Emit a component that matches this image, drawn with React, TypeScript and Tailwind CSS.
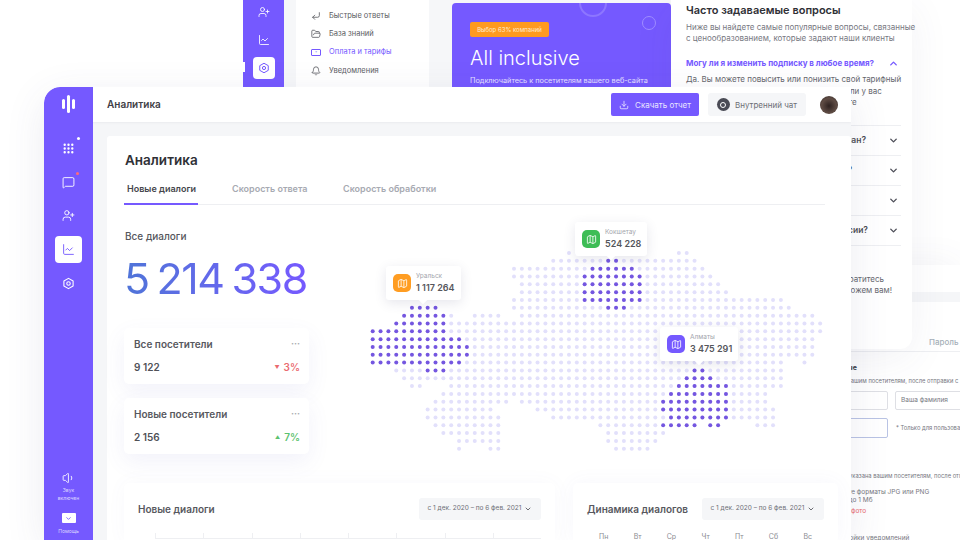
import { Bell, ChartLine, ChevronDown, ChevronUp, CornerDownLeft, Download, FolderOpen, Grip, Map as MapIcon, MessageSquare, UserPlus, Volume1 } from "lucide-react";

const font = { fontFamily: "Inter, 'Noto Sans', sans-serif" };

// dot map rows: [row, from, to]
const lightDots: number[][] = [
  [0, 25, 34], [0, 39, 40], [1, 23, 41], [2, 18, 42], [3, 18, 43], [4, 19, 44], [5, 19, 45], [6, 18, 52],
  [7, 18, 53], [8, 10, 10], [8, 13, 16], [8, 19, 56], [9, 10, 57], [10, 10, 57], [11, 12, 56], [12, 13, 56],
  [13, 13, 56], [14, 12, 52], [14, 55, 55], [15, 3, 6], [15, 10, 52], [16, 4, 52], [17, 5, 6], [17, 10, 52],
  [18, 9, 50], [19, 8, 17], [19, 19, 50], [20, 7, 15], [20, 21, 51], [21, 7, 16], [21, 23, 51], [22, 8, 16],
  [22, 29, 36], [22, 49, 51], [23, 9, 16], [23, 30, 37], [24, 11, 16], [24, 30, 36], [25, 11, 11], [25, 15, 16], [25, 31, 35],
];
const darkDots: number[][] = [
  [1, 30, 31], [2, 28, 33], [3, 27, 34], [4, 27, 34], [5, 27, 34], [6, 27, 34], [7, 5, 8], [7, 30, 32],
  [8, 4, 9], [9, 3, 9], [10, 0, 9], [11, 0, 11], [12, 0, 12], [13, 0, 12], [14, 0, 11], [15, 7, 9], [15, 41, 42],
  [16, 40, 43], [17, 39, 45], [18, 38, 45], [19, 37, 45], [20, 37, 45], [21, 38, 45], [22, 37, 41], [22, 43, 44],
];

function expand(rows: number[][]) {
  const out: { x: number; y: number }[] = [];
  rows.forEach(([r, from, to]) => {
    for (let c = from; c <= to; c++) out.push({ x: 4.7 + c * 7.85, y: 25 + r * 7.83 });
  });
  return out;
}

const HexIcon = ({ className }: { className?: string }) => (
  <svg viewBox="0 0 24 24" fill="none" stroke="currentColor" strokeWidth="2" className={className}>
    <path d="M12 2.5l8.5 4.8v9.4L12 21.5l-8.5-4.8V7.3z" strokeLinejoin="round" />
    <circle cx="12" cy="12" r="3.2" />
  </svg>
);

const Pin = ({ pos, color, city, value }: { pos: string; color: string; city: string; value: string }) => (
  <div className={`absolute flex items-center gap-[5px] rounded-[3px] bg-white pl-[7px] pr-[6px] py-[6px] shadow-[0_3px_12px_rgba(60,60,110,0.13)] ${pos}`}>
    <div className={`flex h-[18px] w-[18px] items-center justify-center rounded-[5px] ${color}`}>
      <MapIcon className="h-[11px] w-[11px] text-white" strokeWidth={1.8} />
    </div>
    <div>
      <div className="text-[6.5px] leading-[9px] text-[#a4a6ad]">{city}</div>
      <div className="mt-[1px] text-[9px] font-semibold leading-[12px] text-[#55565c] whitespace-nowrap">{value}</div>
    </div>
    <div className="absolute bottom-[-3px] left-1/2 h-[6px] w-[6px] -translate-x-1/2 rotate-45 bg-white" />
  </div>
);

const StatCard = ({ title, value, change, up }: { title: string; value: string; change: string; up?: boolean }) => (
  <div className="h-[56px] rounded-[5px] bg-white pl-[10px] pr-[9px] pt-[9px] shadow-[0_8px_22px_rgba(90,90,190,0.08)]">
    <div className="flex items-center justify-between">
      <span className="text-[10px] font-semibold leading-[14px] text-[#57585e]">{title}</span>
      <span className="text-[9px] font-bold leading-[14px] text-[#a8a9b0]">···</span>
    </div>
    <div className="mt-[9px] flex items-center justify-between">
      <span className="text-[10px] font-semibold leading-[14px] text-[#505157]">{value}</span>
      <span className={`flex items-center gap-[4px] text-[10px] font-semibold leading-[14px] ${up ? "text-[#5cc26f]" : "text-[#ea6a6f]"}`}>
        <span className="text-[5px]">{up ? "▲" : "▼"}</span>
        {change}
      </span>
    </div>
  </div>
);

const Period = () => (
  <div className="flex h-[22px] w-[122px] items-center justify-center gap-[3px] rounded-[3px] bg-[#f5f6f8] text-[6.5px] text-[#6d6e75]">
    с 1 дек. 2020 – по 6 фев. 2021
    <ChevronDown className="h-[8px] w-[8px]" strokeWidth={3} />
  </div>
);

const Faq = ({ text, gap }: { text: string; gap: string }) => (
  <div className="flex h-[30px] items-center justify-end border-b border-[#eeeff2] text-[8.5px] font-semibold text-[#4d4e55]">
    <span className={`whitespace-nowrap ${gap}`}>{text}</span>
    <ChevronDown className="mr-[2px] h-[11px] w-[11px] text-[#4d4e58]" strokeWidth={3} />
  </div>
);

function TopWindow() {
  return (
    <div className="absolute left-[243px] top-0 flex h-[90px] w-[428px] bg-[#f6f7f9]">
      <div className="relative flex w-[41px] flex-col items-center bg-[#7559ff] pt-[6px] text-white">
        <div className="absolute left-0 top-[62px] h-[10px] w-[2px] bg-white" />
        <UserPlus className="h-[12px] w-[12px]" strokeWidth={1.7} />
        <ChartLine className="mt-[16px] h-[12px] w-[12px]" strokeWidth={1.7} />
        <div className="mt-[11px] flex h-[22px] w-[22px] items-center justify-center rounded-[4px] bg-white">
          <HexIcon className="h-[12px] w-[12px] text-[#7559ff]" />
        </div>
      </div>
      <div className="ml-[12px] w-[133px] bg-white pl-[15px] pt-[7px] text-[7.5px] text-[#5c5d63]">
        <div className="flex h-[18px] items-center gap-[8px]"><CornerDownLeft className="h-[10px] w-[10px]" />Быстрые ответы</div>
        <div className="flex h-[18px] items-center gap-[8px]"><FolderOpen className="h-[10px] w-[10px]" />База знаний</div>
        <div className="flex h-[18px] items-center gap-[8px] text-[#7559ff]">
          <div className="flex h-[7px] w-[10px] items-center justify-center rounded-[1px] border border-[#7559ff] text-[4px] leading-none">+</div>Оплата и тарифы
        </div>
        <div className="flex h-[20px] items-center gap-[8px]"><Bell className="h-[10px] w-[10px]" />Уведомления</div>
      </div>
      <div className="relative ml-[23px] mt-[3px] h-[90px] w-[219px] overflow-hidden rounded-t-[4px] bg-[#7559ff] pl-[18px] pt-[19px] text-white">
        <div className="absolute left-[127px] top-[-14px] h-[28px] w-[28px] rounded-full border-2 border-[#8d76ff]" />
        <div className="absolute left-[190px] top-[13px] h-[14px] w-[14px] rounded-full border border-[#a08dff]" />
        <div className="flex h-[15px] w-[79px] items-center justify-center rounded-[2px] bg-[#ff9a1f] text-[6px] text-[#ffeccf]">Выбор 63% компаний</div>
        <div className="mt-[8px] text-[20px] font-light leading-[26px]">All inclusive</div>
        <div className="mt-[4px] whitespace-nowrap text-[7.3px] leading-[12px] text-[#e6e1ff]">Подключайтесь к посетителям вашего веб-сайта</div>
      </div>
    </div>
  );
}

function FaqWindow() {
  return (
    <div className="absolute left-[671px] top-0 h-[349px] w-[241px] rounded-br-[12px] bg-white pl-[15px] pr-[11px] shadow-[0_10px_40px_rgba(70,70,120,0.07)]">
      <div className="pt-[3px] text-[11px] font-semibold leading-[15px] text-[#2f3036]">Часто задаваемые вопросы</div>
      <div className="mt-[4px] whitespace-nowrap text-[8px] leading-[11px] text-[#77787f]">
        Ниже вы найдете самые популярные вопросы, связанные<br />с ценообразованием, которые задают наши клиенты
      </div>
      <div className="mt-[13px] flex items-center justify-between text-[8px] font-bold leading-[12px] text-[#7559ff]">
        Могу ли я изменить подписку в любое время?
        <ChevronUp className="mr-[2px] h-[11px] w-[11px]" strokeWidth={3} />
      </div>
      <div className="mt-[5px] whitespace-nowrap text-[8px] leading-[11.5px] text-[#66676e]">
        Да. Вы можете повысить или понизить свой тарифный<br />план в любое время. Хотите узнать, есть ли у вас<br />скидка на оплату и сколько вы сэкономите
      </div>
      <div className="mt-[16px] border-b border-[#eeeff2]" />
      <Faq text="Как выбрать тарифный план?" gap="mr-[22px]" />
      <Faq text="Есть ли пробный период?" gap="mr-[36px]" />
      <Faq text="" gap="" />
      <Faq text="Как перейти на другую версии?" gap="mr-[20px]" />
      <div className="mt-[28px] whitespace-nowrap pr-[9px] text-right text-[8px] leading-[11px] text-[#66676e]">
        <span className="mr-[8px]">Если остались вопросы, обратитесь</span><br />к нам, и мы поможем вам!
      </div>
    </div>
  );
}

function ProfileWindow() {
  return (
    <div className="absolute left-[760px] top-[265px] h-[275px] w-[200px] bg-white text-[6.5px] text-[#77787f] shadow-[0_-6px_30px_rgba(70,70,120,0.05)]">
      <div className="mt-[27px] h-[10px] bg-[#f5f6f8]" />
      <div className="mt-[34px] h-[16px] border-b border-[#eeeff2] pl-[169px] text-[8px] font-medium leading-[12px] text-[#a6b0b8]">Пароль</div>
      <div className="mt-[11px] pl-[40px] text-[7px] font-bold leading-[10px] text-[#404148]">Личные данные</div>
      <div className="mt-[3px] whitespace-nowrap pl-[28px] text-[5.8px] leading-[9px]">Ваши данные видны вашим посетителям, после отправки с</div>
      <div className="mt-[6px] flex gap-[7px] pl-[60px]">
        <div className="h-[19px] w-[68px] shrink-0 rounded-[2px] border border-[#dedfe4]" />
        <div className="flex h-[19px] w-[70px] shrink-0 items-center rounded-[2px] border border-[#dedfe4] pl-[5px]">Ваша фамилия</div>
      </div>
      <div className="mt-[8px] flex items-center gap-[8px] pl-[60px]">
        <div className="h-[20px] w-[68px] shrink-0 rounded-[2px] border border-[#b9c3e4]" />
        <span className="whitespace-nowrap text-[5.8px]">* Только для пользоват</span>
      </div>
      <div className="mt-[33px] whitespace-nowrap pl-[53px] text-[5.8px] leading-[9px]">Фотография указана вашим посетителям, после отп</div>
      <div className="mt-[8px] pl-[54px] leading-[8px] whitespace-nowrap">Используйте форматы JPG или PNG<br />Размером до 1 Мб</div>
      <div className="mt-[3px] pl-[63px] text-[#ea6a6f] whitespace-nowrap">Удалить фото</div>
      <div className="mt-[17px] pl-[70px] text-[#77787f] whitespace-nowrap">Настройки уведомлений</div>
    </div>
  );
}

function Sidebar() {
  return (
    <div className="flex w-[49px] shrink-0 flex-col items-center rounded-tl-[16px] bg-[#7559ff] text-white">
      <div className="mt-[8px] flex h-[18px] items-center gap-[2px]">
        <div className="h-[10px] w-[3px] rounded-full bg-white" />
        <div className="h-[18px] w-[3px] rounded-full bg-white" />
        <div className="h-[10px] w-[3px] rounded-full bg-white" />
      </div>
      <div className="relative mt-[29px]">
        <Grip className="h-[13px] w-[13px]" strokeWidth={2.4} />
        <div className="absolute right-[-5px] top-[-5px] h-[3px] w-[3px] rounded-full bg-white" />
      </div>
      <div className="relative mt-[21px]">
        <MessageSquare className="h-[13px] w-[13px]" strokeWidth={1.7} />
        <div className="absolute right-[-4px] top-[-4px] h-[3px] w-[3px] rounded-full bg-[#ff6b7a]" />
      </div>
      <UserPlus className="mt-[20px] h-[13px] w-[13px]" strokeWidth={1.7} />
      <div className="mt-[14px] flex h-[27px] w-[27px] items-center justify-center rounded-[4px] bg-white">
        <ChartLine className="h-[13px] w-[13px] text-[#7559ff]" strokeWidth={1.7} />
      </div>
      <HexIcon className="mt-[14px] h-[13px] w-[13px]" />
      <Volume1 className="mt-[181px] h-[14px] w-[14px]" strokeWidth={1.5} />
      <div className="mt-[1px] text-center text-[5px] leading-[8px] text-[#dcd6ff]">Звук<br />включен</div>
      <div className="mt-[11px] flex h-[10px] w-[14px] items-center justify-center rounded-[1px] bg-white">
        <ChevronDown className="h-[7px] w-[7px] text-[#7559ff]" strokeWidth={3} />
      </div>
      <div className="mt-[4px] text-[5px] leading-[8px] text-[#dcd6ff]">Помощь</div>
    </div>
  );
}

function Header() {
  return (
    <div className="flex h-[35px] shrink-0 items-center bg-white pl-[14px] shadow-[0_1px_2px_rgba(60,60,90,0.06)]">
      <span className="text-[10px] font-semibold text-[#3f4046]">Аналитика</span>
      <button className="ml-auto flex h-[23px] w-[88px] items-center justify-center gap-[6px] rounded-[2px] bg-[#7559ff] text-[8px] text-[#e9e5ff]">
        <Download className="h-[10px] w-[10px]" strokeWidth={2} />
        Скачать отчет
      </button>
      <button className="ml-[9px] flex h-[23px] w-[98px] items-center justify-center gap-[5px] rounded-[3px] bg-[#f5f6f8] text-[8px] text-[#6d6e75]">
        <span className="flex h-[13px] w-[13px] items-center justify-center rounded-full bg-[#4a4b55]">
          <span className="h-[6px] w-[6px] rounded-full border-[1.5px] border-white" />
        </span>
        Внутренний чат
      </button>
      <div className="ml-[14px] mr-[13px] h-[18px] w-[18px] rounded-full bg-[radial-gradient(circle_at_50%_55%,#2e2220_0%,#5f4c44_55%,#2c2422_100%)]" />
    </div>
  );
}

export default function App() {
  const light = expand(lightDots);
  const dark = expand(darkDots);
  return (
    <div className="relative h-[540px] w-[960px] overflow-hidden bg-white" style={font}>
      <TopWindow />
      <ProfileWindow />
      <FaqWindow />

      <div className="absolute left-[44px] top-[87px] flex h-[453px] w-[807px] overflow-hidden rounded-tl-[16px] bg-[#f5f6f8] shadow-[0_10px_40px_rgba(70,70,120,0.1)]">
        <Sidebar />
        <div className="flex min-w-0 flex-1 flex-col">
          <Header />
          <div className="ml-[14px] mt-[14px] flex-1 rounded-t-[3px] bg-white pl-[17px] pr-[13px] pt-[15px]">
            <div className="pl-[1px] text-[13.5px] font-semibold leading-[18px] text-[#2f3036]">Аналитика</div>

            <div className="mt-[14px] flex w-[701px] border-b border-[#eeeff2] text-[9px] font-semibold leading-[12px]">
              <div className="-mb-px w-[74px] border-b-2 border-[#7559ff] pb-[8px] pl-[3px] text-[#45464c] whitespace-nowrap">Новые диалоги</div>
              <div className="ml-[34px] w-[111px] whitespace-nowrap text-[#a7aab2]">Скорость ответа</div>
              <div className="whitespace-nowrap text-[#a7aab2]">Скорость обработки</div>
            </div>

            <div className="mt-[23px] flex">
              <div className="w-[185px] shrink-0">
                <div className="pl-[1px] pt-[1px] text-[10px] font-medium leading-[14px] text-[#55565c]">Все диалоги</div>
                <div className="mt-[10px] w-fit bg-gradient-to-r from-[#4f74d8] to-[#7559ff] bg-clip-text text-[43px] font-normal leading-[50px] tracking-[-1.4px] text-transparent whitespace-nowrap [word-spacing:-3px]">5 214 338</div>
                <div className="mt-[25px] flex flex-col gap-[14px]">
                  <StatCard title="Все посетители" value="9 122" change="3%" />
                  <StatCard title="Новые посетители" value="2 156" change="7%" up />
                </div>
              </div>

              <div className="relative ml-[59px] h-[226px] w-[460px] shrink-0">
                <svg width="460" height="226" viewBox="0 0 460 226">
                  {light.map((d, i) => <circle key={i} cx={d.x} cy={d.y} r="2" fill="#e2e0fb" />)}
                  {dark.map((d, i) => <circle key={i} cx={d.x} cy={d.y} r="2" fill="#7456e0" />)}
                </svg>
                <Pin pos="left-[18px] top-[38px]" color="bg-[#ff9d22]" city="Уральск" value="1 117 264" />
                <Pin pos="left-[207px] top-[-6px]" color="bg-[#3ebd56]" city="Кокшетау" value="524 228" />
                <Pin pos="left-[292px] top-[99px]" color="bg-[#7559ff]" city="Алматы" value="3 475 291" />
              </div>
            </div>

            <div className="mt-[29px] flex gap-[18px]">
              <div className="h-[60px] w-[431px] shrink-0 rounded-[5px] bg-white px-[14px] pt-[15px] shadow-[0_0_20px_rgba(90,90,190,0.04)]">
                <div className="flex items-center justify-between">
                  <span className="text-[10px] font-semibold text-[#57585e]">Новые диалоги</span>
                  <Period />
                </div>
                <div className="ml-[17px] mt-[13px] flex">
                  {[0, 1, 2, 3, 4, 5, 6, 7].map((i) => <div key={i} className="h-[5px] w-[51px] border-l border-[#eeeff2]" />)}
                </div>
                <div className="ml-[17px] border-t border-[#eeeff2]" />
              </div>
              <div className="h-[60px] w-[265px] shrink-0 rounded-[5px] bg-white px-[14px] pt-[15px] shadow-[0_0_20px_rgba(90,90,190,0.05)]">
                <div className="flex items-center justify-between">
                  <span className="text-[10px] font-semibold whitespace-nowrap text-[#57585e]">Динамика диалогов</span>
                  <Period />
                </div>
                <div className="mt-[12px] flex justify-between pl-[12px] pr-[12px] text-[7px] leading-[10px] text-[#8a8b92]">
                  {["Пн", "Вт", "Ср", "Чт", "Пт", "Сб", "Вс"].map((d) => <span key={d}>{d}</span>)}
                </div>
              </div>
            </div>
          </div>
        </div>
      </div>
    </div>
  );
}
